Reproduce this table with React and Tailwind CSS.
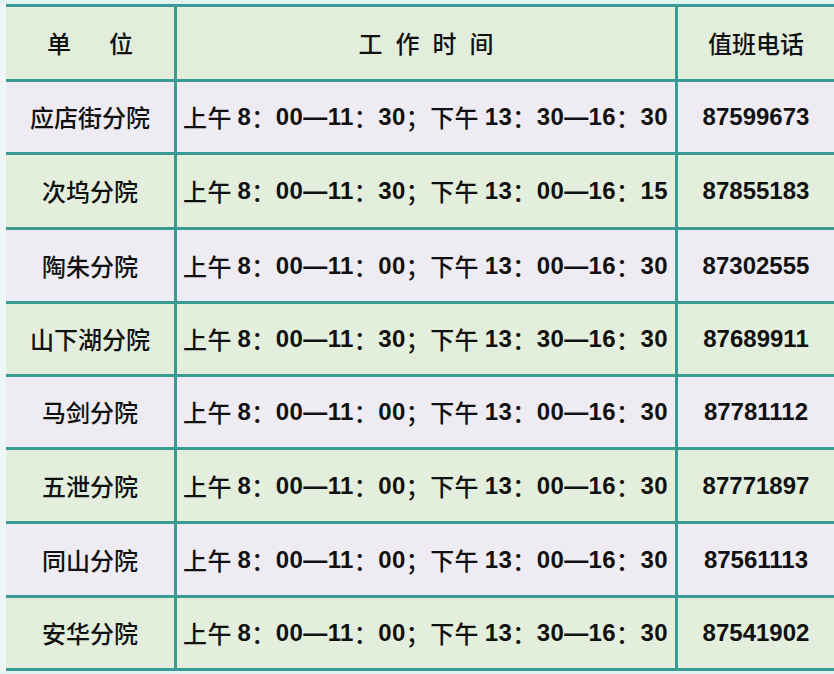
import React from "react";

const rows = [
  { name: "应店街分院", am: ["00", "11", "30"], pm: ["30", "16", "30"], tel: "87599673", h: "h-[70px]", bg: "bg-[#eeecf2]" },
  { name: "次坞分院", am: ["00", "11", "30"], pm: ["00", "16", "15"], tel: "87855183", h: "h-[72px]", bg: "bg-[#e3efdc]" },
  { name: "陶朱分院", am: ["00", "11", "00"], pm: ["00", "16", "30"], tel: "87302555", h: "h-[71px]", bg: "bg-[#eeecf2]" },
  { name: "山下湖分院", am: ["00", "11", "30"], pm: ["30", "16", "30"], tel: "87689911", h: "h-[70px]", bg: "bg-[#e3efdc]" },
  { name: "马剑分院", am: ["00", "11", "00"], pm: ["00", "16", "30"], tel: "87781112", h: "h-[70px]", bg: "bg-[#eeecf2]" },
  { name: "五泄分院", am: ["00", "11", "00"], pm: ["00", "16", "30"], tel: "87771897", h: "h-[71px]", bg: "bg-[#e3efdc]" },
  { name: "同山分院", am: ["00", "11", "00"], pm: ["00", "16", "30"], tel: "87561113", h: "h-[71px]", bg: "bg-[#eeecf2]" },
  { name: "安华分院", am: ["00", "11", "00"], pm: ["30", "16", "30"], tel: "87541902", h: "h-[70px]", bg: "bg-[#e3efdc]" },
];

const cjk = "font-['Noto_Sans_CJK_SC',sans-serif] font-medium";
const num = "font-['Liberation_Sans','Noto_Sans_CJK_SC',sans-serif] font-bold";

function N({ children }) {
  return <span className={num}>{children}</span>;
}
function C({ children }) {
  return <span className={cjk}>{children}</span>;
}

function Time({ am, pm }) {
  return (
    <div className="flex items-center whitespace-pre text-[24px] leading-none tracking-[0.4px] text-[#111]">
      <C>上午 </C>
      <N>8</N>
      <C>：</C>
      <N>{am[0]}</N>
      <N>—</N>
      <N>{am[1]}</N>
      <C>：</C>
      <N>{am[2]}</N>
      <C>；</C>
      <C>下午 </C>
      <N>13</N>
      <C>：</C>
      <N>{pm[0]}</N>
      <N>—</N>
      <N>{pm[1]}</N>
      <C>：</C>
      <N>{pm[2]}</N>
    </div>
  );
}

export default function App() {
  return (
    <div className="w-[834px] h-[674px] bg-[#dff4f1] pt-[4px] overflow-hidden">
      <div className="pl-[6px] bg-[#eef7f5]">
        <div className="border-t-[3px] border-[#3a9b94]">
          {/* header */}
          <div className="flex h-[75px] border-b-[3px] border-[#3a9b94] bg-[#e2eedb] text-[#111]">
            <div className="w-[171px] shrink-0 border-r-[3px] border-[#3a9b94] flex items-center justify-center gap-[38px] text-[24px] leading-none">
              <C>单</C>
              <C>位</C>
            </div>
            <div className="w-[501px] shrink-0 border-r-[3px] border-[#3a9b94] flex items-center justify-center gap-[13px] text-[24px] leading-none">
              <C>工</C>
              <C>作</C>
              <C>时</C>
              <C>间</C>
            </div>
            <div className="flex-1 flex items-center justify-center text-[24px] leading-none">
              <C>值班电话</C>
            </div>
          </div>
          {rows.map((r) => (
            <div
              key={r.name}
              className={`flex border-b-[3px] border-[#3a9b94] ${r.bg} ${r.h} box-content text-[#111]`}
            >
              <div className="w-[171px] shrink-0 border-r-[3px] border-[#3a9b94] flex items-center justify-center text-[24px] leading-none">
                <C>{r.name}</C>
              </div>
              <div className="w-[501px] shrink-0 border-r-[3px] border-[#3a9b94] flex items-center pl-[6px]">
                <Time am={r.am} pm={r.pm} />
              </div>
              <div className="flex-1 flex items-center justify-center text-[24px] leading-none">
                <N>{r.tel}</N>
              </div>
            </div>
          ))}
        </div>
      </div>
    </div>
  );
}
